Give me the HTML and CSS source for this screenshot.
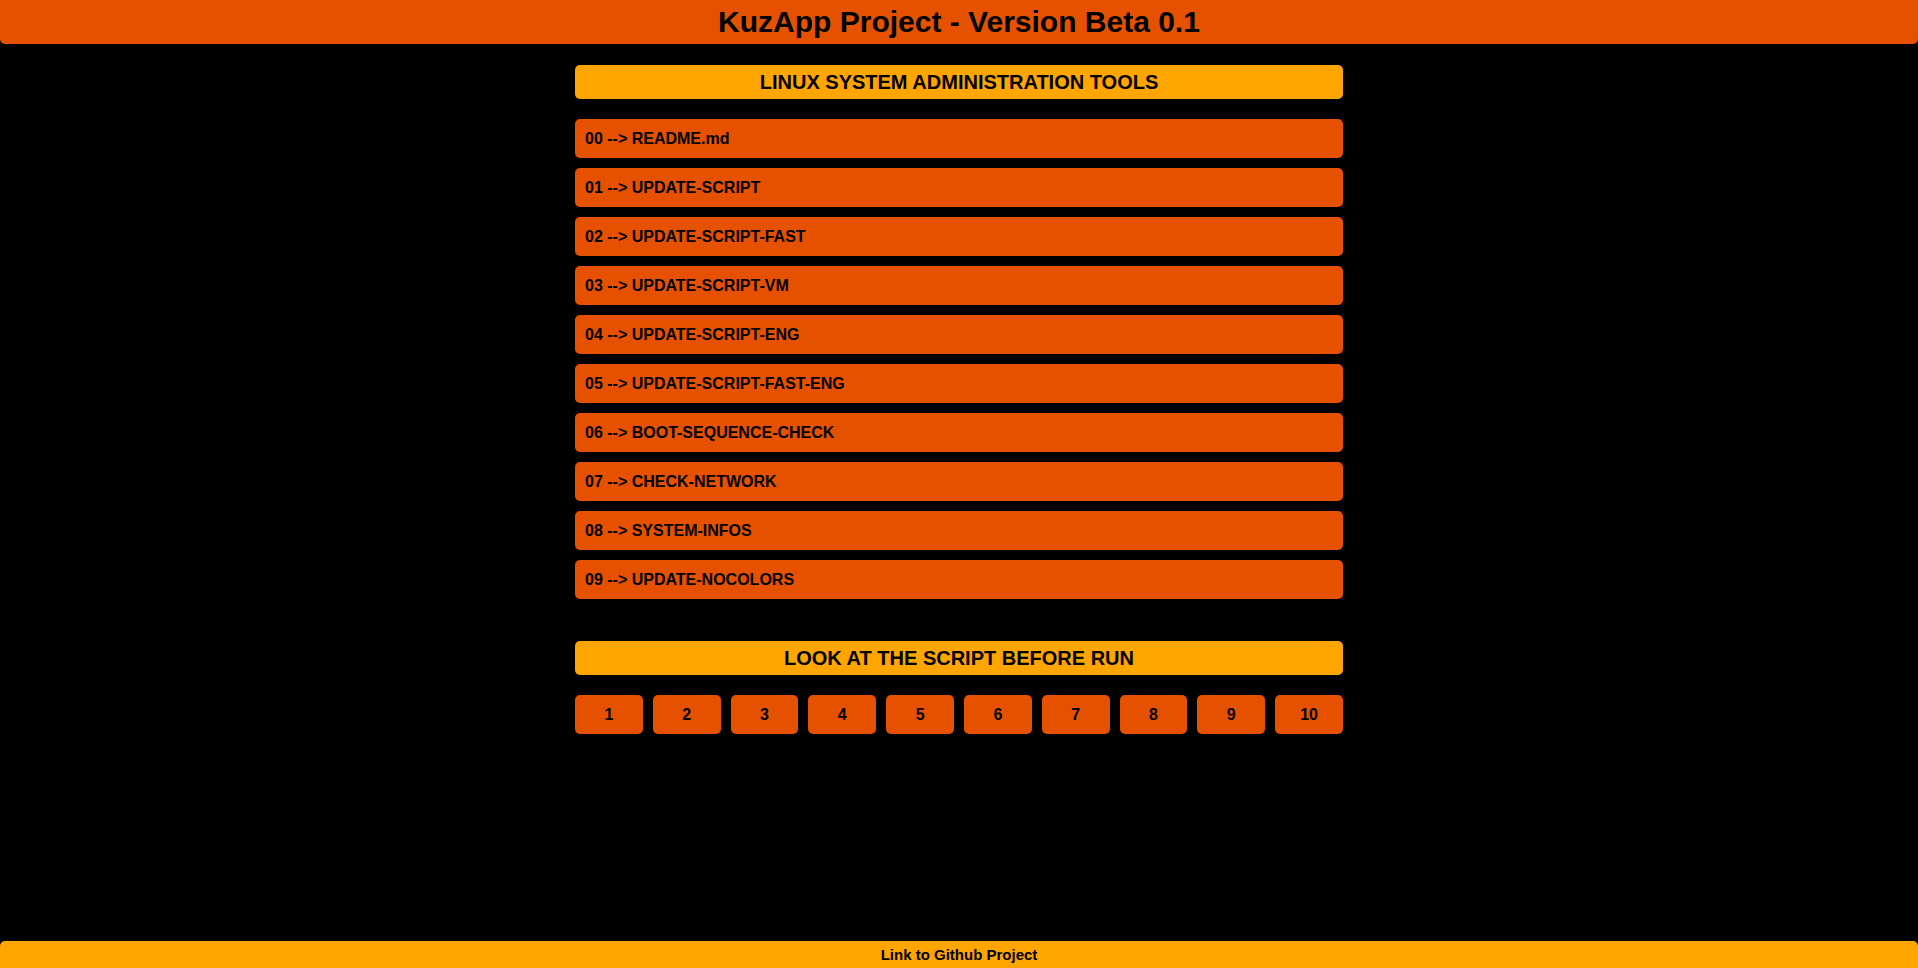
FILE: index.html
```html
<!DOCTYPE html>
<html lang="en">
<head>
<meta charset="utf-8">
<title>KuzApp Project</title>
<link rel="stylesheet" href="styles.css">
</head>
<body>
<header class="top-bar">
  <h1 class="top-title">KuzApp Project - Version Beta 0.1</h1>
</header>
<main class="content">
  <h2 class="section-title">LINUX SYSTEM ADMINISTRATION TOOLS</h2>
  <ul class="tool-list">
    <li class="tool-item">00 --&gt; README.md</li>
    <li class="tool-item">01 --&gt; UPDATE-SCRIPT</li>
    <li class="tool-item">02 --&gt; UPDATE-SCRIPT-FAST</li>
    <li class="tool-item">03 --&gt; UPDATE-SCRIPT-VM</li>
    <li class="tool-item">04 --&gt; UPDATE-SCRIPT-ENG</li>
    <li class="tool-item">05 --&gt; UPDATE-SCRIPT-FAST-ENG</li>
    <li class="tool-item">06 --&gt; BOOT-SEQUENCE-CHECK</li>
    <li class="tool-item">07 --&gt; CHECK-NETWORK</li>
    <li class="tool-item">08 --&gt; SYSTEM-INFOS</li>
    <li class="tool-item">09 --&gt; UPDATE-NOCOLORS</li>
  </ul>
  <h2 class="section-title section-title-second">LOOK AT THE SCRIPT BEFORE RUN</h2>
  <div class="script-buttons">
    <div class="script-btn">1</div>
    <div class="script-btn">2</div>
    <div class="script-btn">3</div>
    <div class="script-btn">4</div>
    <div class="script-btn">5</div>
    <div class="script-btn">6</div>
    <div class="script-btn">7</div>
    <div class="script-btn">8</div>
    <div class="script-btn">9</div>
    <div class="script-btn">10</div>
  </div>
</main>
<footer class="bottom-bar">Link to Github Project</footer>
</body>
</html>
```
FILE: styles.css
```css
html, body {
  margin: 0;
  padding: 0;
}
body {
  background: #000;
  color: #000;
  font-family: "Liberation Sans", Arial, sans-serif;
  font-weight: bold;
  min-height: 100vh;
  display: flex;
  flex-direction: column;
}
.top-bar {
  background: #e65100;
  height: 44px;
  border-radius: 0 0 5px 5px;
  display: flex;
  align-items: center;
  justify-content: center;
}
.top-title {
  margin: 0;
  font-size: 30px;
  line-height: 44px;
  font-weight: bold;
}
.content {
  width: 768px;
  margin: 21px auto 0;
}
.section-title {
  margin: 0;
  background: #ffa500;
  height: 34px;
  line-height: 34px;
  border-radius: 5px;
  text-align: center;
  font-size: 20px;
  font-weight: bold;
}
.section-title-second {
  margin-top: 42px;
}
.tool-list {
  list-style: none;
  margin: 20px 0 0;
  padding: 0;
  display: flex;
  flex-direction: column;
  gap: 10px;
}
.tool-item {
  background: #e65100;
  height: 39px;
  line-height: 39px;
  border-radius: 5px;
  padding-left: 10px;
  font-size: 16px;
}
.script-buttons {
  margin-top: 20px;
  display: flex;
  gap: 10px;
}
.script-btn {
  flex: 1;
  background: #e65100;
  height: 39px;
  line-height: 39px;
  border-radius: 5px;
  text-align: center;
  font-size: 16px;
}
.bottom-bar {
  margin-top: auto;
  background: #ffa500;
  height: 27px;
  line-height: 27px;
  border-radius: 5px 5px 0 0;
  text-align: center;
  font-size: 15px;
}
```
